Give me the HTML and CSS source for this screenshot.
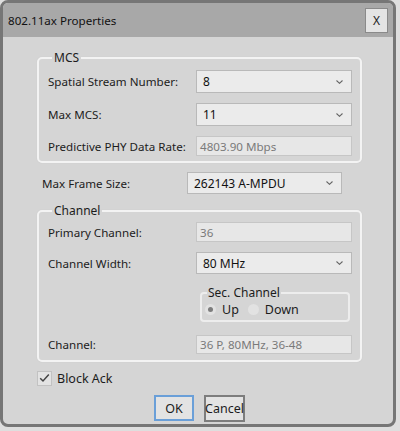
FILE: index.html
```html
<!DOCTYPE html>
<html>
<head>
<meta charset="utf-8">
<link rel="stylesheet" href="styles.css">
</head>
<body>
<div class="dialog">
  <div class="titlebar">
    <span class="title">802.11ax Properties</span>
    <span class="close">X</span>
  </div>
  <div class="content">
    <fieldset class="group mcs">
      <legend>MCS</legend>
      <div class="row r1">
        <span class="label">Spatial Stream Number:</span>
        <span class="select">8<svg class="chev" width="7" height="4" viewBox="0 0 7 4"><path d="M0.5 0.5 L3.5 3.3 L6.5 0.5" fill="none" stroke="#666" stroke-width="1.1"/></svg></span>
      </div>
      <div class="row r2">
        <span class="label">Max MCS:</span>
        <span class="select">11<svg class="chev" width="7" height="4" viewBox="0 0 7 4"><path d="M0.5 0.5 L3.5 3.3 L6.5 0.5" fill="none" stroke="#666" stroke-width="1.1"/></svg></span>
      </div>
      <div class="row r3">
        <span class="label">Predictive PHY Data Rate:</span>
        <span class="field">4803.90 Mbps</span>
      </div>
    </fieldset>

    <div class="row frame">
      <span class="label flabel">Max Frame Size:</span>
      <span class="select fselect">262143 A-MPDU<svg class="chev" width="7" height="4" viewBox="0 0 7 4"><path d="M0.5 0.5 L3.5 3.3 L6.5 0.5" fill="none" stroke="#666" stroke-width="1.1"/></svg></span>
    </div>

    <fieldset class="group channel">
      <legend>Channel</legend>
      <div class="row c1">
        <span class="label">Primary Channel:</span>
        <span class="field">36</span>
      </div>
      <div class="row c2">
        <span class="label">Channel Width:</span>
        <span class="select">80 MHz<svg class="chev" width="7" height="4" viewBox="0 0 7 4"><path d="M0.5 0.5 L3.5 3.3 L6.5 0.5" fill="none" stroke="#666" stroke-width="1.1"/></svg></span>
      </div>
      <div class="row c3">
        <span class="label"></span>
        <fieldset class="sec">
          <legend>Sec. Channel</legend>
          <div class="radios">
            <span class="radio on"></span><span class="rlabel">Up</span>
            <span class="radio"></span><span class="rlabel">Down</span>
          </div>
        </fieldset>
      </div>
      <div class="row c4">
        <span class="label">Channel:</span>
        <span class="field">36 P, 80MHz, 36-48</span>
      </div>
    </fieldset>

    <div class="check-row">
      <span class="checkbox"><svg width="11" height="10" viewBox="0 0 11 10"><path d="M1.2 5.2 L4 8 L9.8 1.5" fill="none" stroke="#444" stroke-width="1.5"/></svg></span>
      <span class="clabel">Block Ack</span>
    </div>

    <div class="buttons">
      <span class="btn ok">OK</span>
      <span class="btn cancel">Cancel</span>
    </div>
  </div>
</div>
</body>
</html>
```
FILE: styles.css
```css
html, body {
  margin: 0;
  padding: 0;
  background: #dedede;
  width: 400px;
  height: 431px;
  overflow: hidden;
}
body {
  font-family: "Noto Sans", "Open Sans", sans-serif;
  font-size: 11.6px;
  color: #1c1c1c;
}
.dialog {
  width: 396px;
  height: 427px;
  box-sizing: border-box;
  border: 3px solid #767676;
  border-radius: 8px;
  background: #d5d5d5;
  overflow: hidden;
}
.titlebar {
  height: 34px;
  background: #a8a8a8;
  display: flex;
  align-items: center;
  justify-content: space-between;
  padding: 0 5px;
}
.title {
  font-size: 11.6px;
  color: #111;
}
.close {
  width: 23px;
  height: 25px;
  box-sizing: border-box;
  background: #e4e4e4;
  border: 1px solid #8a8a8a;
  display: flex;
  align-items: center;
  justify-content: center;
  font-size: 12px;
  color: #222;
  margin-top: 1px;
}
.content {
  padding: 0 31px 0 34px;
  display: flex;
  flex-direction: column;
}
.group {
  margin: 0;
  border: 2px solid #f3f3f3;
  border-radius: 5px;
  box-shadow: 0 0 1px #bcbcbc;
  padding: 0 8px 0 9px;
  min-width: 0;
}
.group > legend {
  padding: 0 2px;
  margin-left: 4px;
  line-height: 16px;
  font-size: 12px;
}
.mcs {
  margin-top: 13px;
  padding-top: 4px;
  padding-bottom: 5px;
}
.row {
  display: flex;
  align-items: center;
}
.label {
  width: 148px;
  flex: none;
}
.select, .field {
  width: 156px;
  box-sizing: border-box;
  display: flex;
  align-items: center;
  justify-content: space-between;
  padding: 0 8px 0 6px;
}
.select {
  height: 23px;
  background: #ebebeb;
  border: 1px solid #b9b9b9;
  color: #111;
  font-size: 12px;
}
.field {
  height: 20px;
  background: #e7e7e7;
  border: 1px solid #c6c6c6;
  color: #7a7a7a;
  padding-left: 3px;
}
.chev { flex: none; }
.r2 { margin-top: 10px; }
.r3 { margin-top: 10px; }
.frame {
  margin-top: 9px;
  padding-left: 5px;
}
.flabel { width: 145px; }
.fselect { width: 155px; height: 22px; }
.channel {
  margin-top: 9px;
  padding-top: 3px;
  padding-bottom: 6px;
}
.c2 { margin-top: 10px; }
.c2 .select { height: 22px; }
.c3 { margin-top: 11px; }
.c4 { margin-top: 13px; }
.c4 .field { height: 19px; }
.sec {
  margin: 0 0 0 4px;
  width: 150px;
  box-sizing: border-box;
  border: 2px solid #ededed;
  border-radius: 4px;
  padding: 0 0 3px 3px;
  min-width: 0;
}
.sec > legend {
  padding: 0 1px;
  margin-left: 2px;
  line-height: 16px;
  font-size: 12px;
}
.radios {
  display: flex;
  align-items: center;
  height: 16px;
}
.radio {
  width: 11px;
  height: 11px;
  border-radius: 50%;
  background: #e2e2e2;
  box-sizing: border-box;
  position: relative;
  flex: none;
}
.radio.on::after {
  content: "";
  position: absolute;
  left: 3px;
  top: 3px;
  width: 5px;
  height: 5px;
  border-radius: 50%;
  background: #7d7d7d;
}
.rlabel {
  margin-left: 6px;
  margin-right: 9px;
  font-size: 12.5px;
}
.check-row {
  display: flex;
  align-items: center;
  margin-top: 8px;
  height: 16px;
}
.checkbox {
  width: 15px;
  height: 15px;
  box-sizing: border-box;
  background: #e3e3e3;
  border: 1px solid #c2c2c2;
  display: flex;
  align-items: center;
  justify-content: center;
}
.clabel {
  margin-left: 5px;
  font-size: 12.5px;
}
.buttons {
  display: flex;
  justify-content: center;
  gap: 10px;
  margin-top: 9px;
}
.btn {
  height: 26px;
  box-sizing: border-box;
  display: flex;
  align-items: center;
  justify-content: center;
  background: #e3e3e3;
  font-size: 12.5px;
}
.ok {
  width: 40px;
  border: 2px solid #6a9fd8;
}
.cancel {
  width: 41px;
  height: 27px;
  border: 2px solid #7d7d7d;
}
```
